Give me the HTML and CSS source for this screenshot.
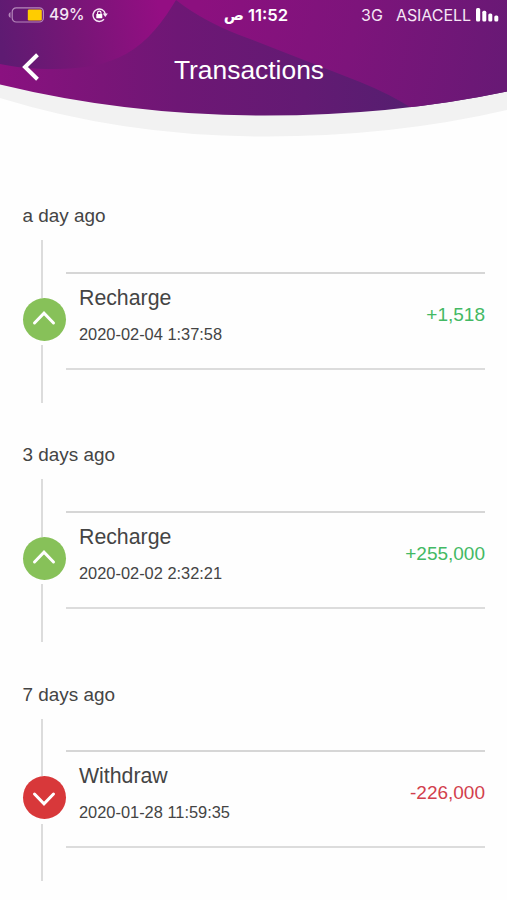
FILE: index.html
```html
<!DOCTYPE html>
<html lang="en">
<head>
  <meta charset="UTF-8">
  <meta name="viewport" content="width=device-width, initial-scale=1.0">
  <title>Transactions</title>
  <link rel="stylesheet" href="styles.css">
</head>
<body>
  <!-- Header -->
  <header class="header">
    <svg class="header-bg" width="507" height="140" viewBox="0 0 507 140">
      <defs>
        <linearGradient id="base" x1="0" y1="0" x2="507" y2="0" gradientUnits="userSpaceOnUse">
          <stop offset="0" stop-color="#8a1180"/>
          <stop offset="0.2" stop-color="#7a1578"/>
          <stop offset="0.35" stop-color="#6e1775"/>
          <stop offset="0.6" stop-color="#631a73"/>
          <stop offset="0.8" stop-color="#561e70"/>
        </linearGradient>
        <linearGradient id="circle" x1="0" y1="40" x2="160" y2="10" gradientUnits="userSpaceOnUse">
          <stop offset="0" stop-color="#5e1b72"/>
          <stop offset="0.45" stop-color="#761676"/>
          <stop offset="1" stop-color="#940e83"/>
        </linearGradient>
        <linearGradient id="wave" x1="200" y1="0" x2="507" y2="60" gradientUnits="userSpaceOnUse">
          <stop offset="0" stop-color="#8c107f"/>
          <stop offset="0.5" stop-color="#7d147b"/>
          <stop offset="1" stop-color="#681975"/>
        </linearGradient>
        <clipPath id="arc">
          <path d="M0 0H507V91.500Q393 115.500 265 115.500Q128 115.500 0 84.500Z"/>
        </clipPath>
      </defs>
      <path d="M0 0H507V110Q393 136.500 265 136.500Q125 136.500 0 98Z" fill="#f2f2f2"/>
      <g clip-path="url(#arc)">
        <rect width="507" height="120" fill="url(#base)"/>
        <path d="M0 0H176C164 20 148 42 126 54C108 64 84 69 55 69C32 69 14 67 0 64Z" fill="url(#circle)"/>
        <path d="M176 0Q205 23 250 39L360 82Q390 94 413 109L507 95V0Z" fill="url(#wave)"/>
      </g>
    </svg>

    <div class="status-bar">
      <div class="status-left">
        <svg class="battery" width="36" height="16" viewBox="0 0 36 16">
          <path d="M2.500 5Q0.500 6 0.500 8T2.500 11Z" fill="#b588bb"/>
          <rect x="4.200" y="0.800" width="31.200" height="14.200" rx="4" fill="none" stroke="#b588bb" stroke-width="1.200"/>
          <rect x="19.800" y="2.500" width="14" height="11" rx="1.200" fill="#ffcc00"/>
        </svg>
        <span class="percent">49%</span>
        <svg class="lock" width="16" height="16" viewBox="0 0 16 16">
          <path d="M12 12.200A6.200 6.200 0 1 1 13.300 7" fill="none" stroke="#f5e6f5" stroke-width="1.400"/>
          <path d="M10.800 6.500H15.800L13.300 10Z" fill="#f5e6f5"/>
          <rect x="4.300" y="7" width="6" height="4.300" rx="0.600" fill="#fff"/>
          <path d="M5.600 7V5.800a1.700 1.700 0 0 1 3.400 0V7" fill="none" stroke="#fff" stroke-width="1.100"/>
        </svg>
      </div>
      <div class="clock"><span class="meridiem">ص</span><span>11:52</span></div>
      <div class="status-right">
        <span class="network">3G</span>
        <span class="carrier">ASIACELL</span>
        <svg class="signal" width="23" height="14" viewBox="0 0 23 14" fill="#fff">
          <rect x="0" y="0" width="4.200" height="13.500" rx="1.500"/>
          <rect x="6.300" y="2.800" width="4" height="10.700" rx="1.500"/>
          <rect x="12.300" y="5.500" width="4" height="8" rx="1.500"/>
          <rect x="18.300" y="7.500" width="4" height="6" rx="1.500"/>
        </svg>
      </div>
    </div>

    <div class="nav">
      <svg class="back" width="18" height="28" viewBox="0 0 18 28">
        <path d="M15.500 1.800L3 14L15.500 26.200" fill="none" stroke="#fff" stroke-width="4"/>
      </svg>
      <h1>Transactions</h1>
    </div>
  </header>

  <!-- Transactions list -->
  <main class="list">
    <section class="group">
      <h2>a day ago</h2>
      <div class="row">
        <div class="timeline">
          <div class="line"></div>
          <div class="dot up">
            <svg width="24" height="16" viewBox="0 0 24 16"><path d="M2.500 13L12 3.200L21.500 13"/></svg>
          </div>
          <div class="line line-bottom"></div>
        </div>
        <div class="card">
          <div class="info">
            <div class="type">Recharge</div>
            <div class="date">2020-02-04 1:37:58</div>
          </div>
          <div class="amount plus">+1,518</div>
        </div>
      </div>
    </section>

    <section class="group">
      <h2>3 days ago</h2>
      <div class="row">
        <div class="timeline">
          <div class="line"></div>
          <div class="dot up">
            <svg width="24" height="16" viewBox="0 0 24 16"><path d="M2.500 13L12 3.200L21.500 13"/></svg>
          </div>
          <div class="line line-bottom"></div>
        </div>
        <div class="card">
          <div class="info">
            <div class="type">Recharge</div>
            <div class="date">2020-02-02 2:32:21</div>
          </div>
          <div class="amount plus">+255,000</div>
        </div>
      </div>
    </section>

    <section class="group">
      <h2>7 days ago</h2>
      <div class="row">
        <div class="timeline">
          <div class="line"></div>
          <div class="dot down">
            <svg width="24" height="16" viewBox="0 0 24 16"><path d="M2.500 3L12 12.800L21.500 3"/></svg>
          </div>
          <div class="line line-bottom"></div>
        </div>
        <div class="card">
          <div class="info">
            <div class="type">Withdraw</div>
            <div class="date">2020-01-28 11:59:35</div>
          </div>
          <div class="amount minus">-226,000</div>
        </div>
      </div>
    </section>
  </main>
</body>
</html>
```

FILE: styles.css
```css
* {
  box-sizing: border-box;
}

body {
  margin: 0;
  width: 507px;
  height: 900px;
  overflow: hidden;
  background: #fefefe;
  font-family: "Liberation Sans", Arial, sans-serif;
  color: #444;
}

svg {
  display: block;
  flex: none;
}

h1, h2 {
  margin: 0;
  font-weight: normal;
}

/* Header */
.header {
  position: relative;
  height: 140px;
  color: #fff;
}

.header-bg {
  position: absolute;
  top: 0;
  left: 0;
}

.status-bar {
  position: relative;
  display: grid;
  grid-template-columns: 1fr auto 1fr;
  align-items: center;
  height: 30px;
  padding: 0 8px;
  font-family: Inter, sans-serif;
  font-size: 16px;
  line-height: 30px;
  white-space: nowrap;
}

.status-left, .status-right, .clock {
  display: flex;
  align-items: center;
}

.percent {
  margin-left: 5px;
  font-size: 15.6px;
  font-weight: 500;
  color: #f5e6f5;
}

.lock {
  margin-left: 7px;
}

.clock {
  gap: 4px;
  padding-left: 5px;
  font-size: 16.6px;
  font-weight: 600;
}

.meridiem {
  font-family: "DejaVu Sans", sans-serif;
  font-size: 15px;
  font-weight: bold;
}

.status-right {
  justify-content: flex-end;
  color: #f5e6f5;
}

.network {
  margin-right: 13px;
}

.carrier {
  margin-right: 5px;
  letter-spacing: -0.05px;
}

.nav {
  position: relative;
  display: grid;
  grid-template-columns: 48px 1fr 48px;
  align-items: center;
  height: 74px;
}

.back {
  margin-left: 22px;
}

.nav h1 {
  font-size: 26.4px;
  text-align: center;
  line-height: 30px;
  padding: 6px 9px 0 0;
}

/* List */
.list {
  padding: 64px 22px 0 22.5px;
}

.group {
  height: 239.3px;
}

.group h2 {
  font-size: 18.9px;
  line-height: 24px;
}

.row {
  display: flex;
  align-items: flex-start;
  margin-top: 12px;
}

.timeline {
  width: 43px;
  display: flex;
  flex-direction: column;
}

.line {
  width: 2px;
  height: 57.5px;
  margin-left: 18.5px;
  background: #dcdcdc;
}

.line-bottom {
  margin-top: 4.5px;
}

.dot {
  width: 43px;
  height: 43px;
  border-radius: 50%;
  display: flex;
  justify-content: center;
  align-items: center;
}

.dot path {
  fill: none;
  stroke: #fff;
  stroke-width: 3;
  stroke-linecap: round;
}

.up {
  background: #87c159;
}

.up svg {
  margin-bottom: 3px;
}

.down {
  background: #d8383a;
}

.down svg {
  margin-top: 3px;
}

.card {
  flex: 1;
  display: flex;
  justify-content: space-between;
  height: 98px;
  margin-top: 31.5px;
  padding-left: 13.5px;
  border-top: 2px solid #d6d6d6;
  border-bottom: 2px solid #dcdcdc;
}

.type {
  margin-top: 11px;
  font-size: 21.3px;
  line-height: 26px;
}

.date {
  margin-top: 13px;
  font-size: 16.4px;
  line-height: 20px;
}

.amount {
  margin-top: 29px;
  font-size: 19px;
  line-height: 24px;
}

.plus {
  color: #43b964;
}

.minus {
  color: #d23f4d;
}
```
